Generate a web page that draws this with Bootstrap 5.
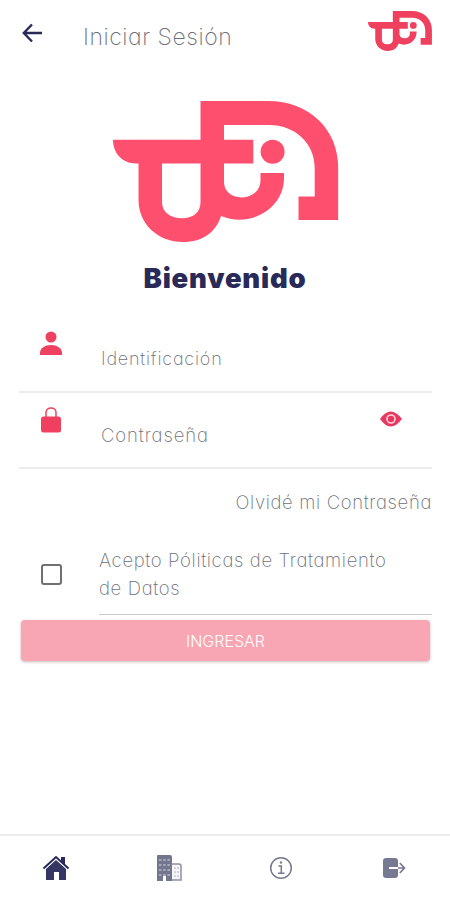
<!DOCTYPE html>
<html lang="es">
<head>
<meta charset="utf-8">
<meta name="viewport" content="width=device-width, initial-scale=1">
<title>Iniciar Sesión</title>
<link href="https://cdn.jsdelivr.net/npm/bootstrap@5.3.0/dist/css/bootstrap.min.css" rel="stylesheet">
<style>
body{font-family:Inter,"Open Sans",sans-serif;font-feature-settings:"cv11";font-weight:200;color:#6d707b;background:#fff}
svg{display:block;flex:none}
.screen{height:900px}
.topbar{height:74px;padding:0 18px 0 22px}
.page-title{font-size:23px;font-weight:200;margin-left:40px;letter-spacing:.55px;line-height:74px}
.top-logo{margin-top:-12px}
.main-logo{margin:27px 0 0 113px}
.welcome{font-size:27.5px;font-weight:900;color:#292a58;line-height:32px;margin-top:20px;letter-spacing:.8px}
.field{height:76px;margin:0 18px 0 19px;border-bottom:2px solid #ececee}
.field-user{height:76px;margin-top:23px}
.field-label{font-size:18px;line-height:26px;margin-top:29px;letter-spacing:.8px}
.field-pass{font-size:18.5px;letter-spacing:.9px}
.slot{width:82px;padding:14px 0 0 20px}
.eye{margin:16px 20px 0 auto}
.forgot{font-size:18.5px;line-height:26px;margin:20px 18px 0 0;letter-spacing:.65px}
.terms{margin:32px 18px 0 99px;height:68px;border-bottom:1px solid #cbcbd0;font-size:18.5px;line-height:27.5px;letter-spacing:.65px}
.terms-text{white-space:nowrap}
.box{width:21px;height:21px;border:2px solid #707074;border-radius:3px;margin:17px 37px 0 -58px;flex:none}
.enter{height:41px;margin:5px 20px 0 21px;background:#f8a6b3;color:#fff;border:0;border-radius:4px;font-size:16px;font-weight:300;padding:0;box-shadow:0 1px 3px #a9838c99}
.enter:hover{background:#f599a8;color:#fff}
.tabs{height:66px;border-top:2px solid #ececee}
.tabs a{width:112.5px;display:flex;justify-content:center;align-items:center}
</style>
</head>
<body>
<svg width="0" height="0" class="position-absolute"><defs><symbol id="logo" viewBox="113 101 225.5 141">
<path fill-rule="evenodd" d="M113 139.8H200.5V101H268C309 101 338.3 129 338.3 168V220H298.5V196.5H314.7V168C314.7 143 295 125 269 125H224V139.8H253.3V163.5H224V182C224 191 231 197.4 242 197.4C253 197.4 260.5 190 260.5 180V173H284V178C284 209 250 228 221 216C216 232 203 242 183 242C157 242 138.5 223 138.5 200V163.5H136C122 163.5 113 153 113 139.8ZM162 163.5V202C162 212 170 218.2 182 218.2C194 218.2 200.5 212 200.5 202V163.5Z"/><circle cx="272.6" cy="151.7" r="12"/></symbol></defs></svg>
<div class="screen d-flex flex-column">
<header class="topbar d-flex align-items-center">
<svg width="21" height="20" viewBox="0 0 21 20" fill="none" stroke="#292a58" stroke-width="2.4" class="mb-2"><path d="M20 10H2M10 1.5L1.8 10L10 18.5"/></svg>
<h1 class="page-title mb-0">Iniciar Sesión</h1>
<svg class="top-logo ms-auto" width="64" height="40" fill="#ef4060"><use href="#logo"/></svg>
</header>
<main>
<svg class="main-logo" width="225.5" height="141" fill="#ff4f6e"><use href="#logo"/></svg>
<h2 class="welcome text-center mb-0">Bienvenido</h2>
<div class="field field-user d-flex">
<div class="slot"><svg width="24" height="25" viewBox="0 0 24 25" fill="#ef4060"><circle cx="12" cy="6" r="5.5"/><path d="M1 24V22C1 17 6 14 12 14S23 17 23 22V24Z"/></svg></div>
<span class="field-label">Identificación</span>
</div>
<div class="field d-flex">
<div class="slot"><svg width="24" height="26" viewBox="0 0 24 26"><rect x="2" y="9.5" width="20" height="16" rx="2.5" fill="#ef4060"/><path d="M7 10V5.5C7 -.5 17 -.5 17 5.5V10" fill="none" stroke="#ef4060" stroke-width="1.5"/></svg></div>
<span class="field-label field-pass">Contraseña</span>
<svg class="eye" width="35" height="20" viewBox="0 0 35 20"><path d="M3 10Q13.5-5 25 10Q13.5 25 3 10Z" fill="#e93860"/><circle cx="14" cy="10" r="4" fill="none" stroke="#ffd7df" stroke-width="1.6"/></svg>
</div>
<div class="forgot text-end"><span>Olvidé mi Contraseña</span></div>
<div class="terms d-flex"><span class="box" role="checkbox" aria-checked="false"></span><span class="terms-text">Acepto Póliticas de Tratamiento<br>de Datos</span></div>
<div class="d-grid"><button class="btn enter">INGRESAR</button></div>
</main>
<nav class="tabs d-flex mt-auto">
<a href="#" aria-label="Inicio"><svg width="28" height="28" viewBox="0 0 28 28"><path d="M4 15L14 6L24 15V26H17V18H12V26H4Z" fill="#353762"/><path d="M1.5 14.5L14 3L26.5 14.5" fill="none" stroke="#292a58" stroke-width="2"/><path d="M19 3H23V11L19 7Z" fill="#292a58"/></svg></a>
<a href="#" aria-label="Empresa"><svg width="26" height="28" viewBox="0 0 26 28"><path d="M1 2Q1 1 2 1H14Q16 1 16 3V27H10V22H7V27H1Z" fill="#74758f"/><path d="M3 6H14M3 11H14M3 16H14M3 21H14" stroke="#b9b9ca" stroke-width="1.4" stroke-dasharray="2.5 1.7"/><path d="M16 10H23Q25 10 25 12V26H16" fill="#f5f5f8" stroke="#8e8fa3" stroke-width="1.5"/><path d="M18 14H23M18 18H23M18 22H23" stroke="#b0b0c0" stroke-dasharray="2 1"/></svg></a>
<a href="#" aria-label="Información"><svg width="24" height="24" viewBox="0 0 24 24" fill="none" stroke="#777891" stroke-width="1.5"><circle cx="12" cy="12" r="10.3"/><path d="M9.5 10H12.3V17M9 17.3H15.5"/><circle cx="12" cy="6.5" r="1" fill="#777891" stroke-width=".5"/></svg></a>
<a href="#" aria-label="Salir"><svg width="24" height="22" viewBox="0 0 24 22"><rect x="1" y="1" width="15" height="20" rx="3" fill="#777891"/><path d="M7 11H16" stroke="#fff" stroke-width="2"/><path d="M16 11H22M17.8 6L22.5 11L17.8 16" fill="none" stroke="#777891" stroke-width="1.7"/></svg></a>
</nav>
</div>
<script src="https://cdn.jsdelivr.net/npm/bootstrap@5.3.0/dist/js/bootstrap.bundle.min.js"></script>
</body>
</html>
